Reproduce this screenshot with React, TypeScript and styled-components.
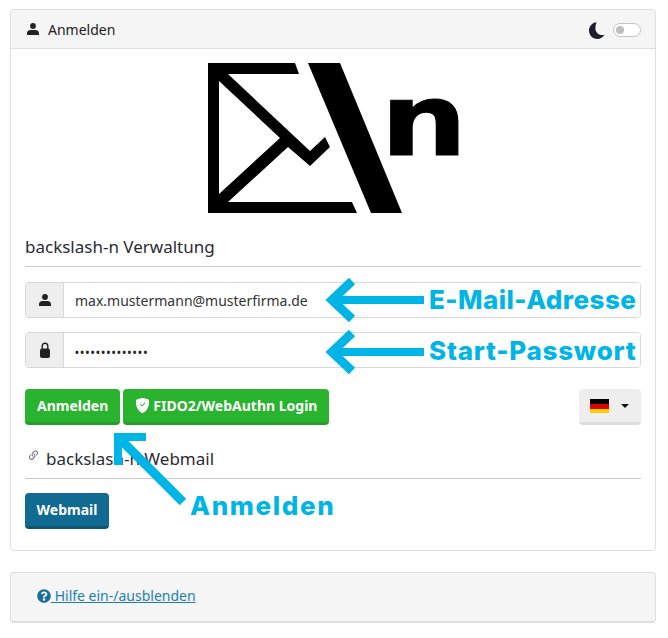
import React from "react";
import styled, { createGlobalStyle } from "styled-components";
import { FaQuestionCircle } from "react-icons/fa";
import { BsShieldFillCheck, BsLink45Deg } from "react-icons/bs";

const Global = createGlobalStyle`
  html, body { margin: 0; padding: 0; background: #fff; }
  body { font-family: "Noto Sans", "Open Sans", sans-serif; color: #212529; font-size: 14px; }
  * { box-sizing: border-box; }
`;

const Page = styled.div`
  position: relative;
  width: 668px;
  height: 638px;
  padding: 9px 12px 0 10px;
  overflow: hidden;
`;

const Card = styled.section`
  height: 542px;
  border: 1px solid #dedede;
  border-radius: 4px;
  background: #fff;
`;

const CardHeader = styled.header`
  height: 39px;
  background: #f5f5f5;
  border-bottom: 1px solid #dedede;
  border-radius: 3px 3px 0 0;
  padding: 0 14px 0 16px;
  display: flex;
  align-items: center;
  justify-content: space-between;
`;

const HeaderTitle = styled.div`
  display: flex;
  align-items: center;
  gap: 9px;
  font-size: 14px;
  color: #222;
`;

const ThemeSwitch = styled.div`
  display: flex;
  align-items: center;
  gap: 8px;
  margin-top: 2px;
  svg { width: 16px; height: 17px; color: #1c1f2b; }
`;

const Toggle = styled.span`
  display: block;
  width: 28px;
  height: 14px;
  border: 1px solid #c4c4c4;
  border-radius: 7px;
  background: #fff;
  padding: 2px;
  &::before {
    content: "";
    display: block;
    width: 8px;
    height: 8px;
    border-radius: 50%;
    background: #bdbdbd;
  }
`;

const CardBody = styled.div`
  padding: 14px 14px 0 14px;
`;

const LogoWrap = styled.div`
  display: flex;
  justify-content: flex-start;
  padding-left: 183px;
  height: 150px;
  margin-bottom: 20px;
`;

const SectionTitle = styled.h2`
  margin: 0;
  font-size: 17px;
  font-weight: 400;
  line-height: 23px;
  height: 34px;
  padding-top: 2px;
  border-bottom: 1px solid #c9c9c9;
  color: #2b2b33;
  display: flex;
  align-items: flex-start;
  svg { width: 13px; height: 13px; margin: 2px 6px 0 2px; color: #555; flex: none; }
`;

const Field = styled.div<{ $top: number }>`
  display: flex;
  height: 36px;
  margin-top: ${(p) => p.$top}px;
  border: 1px solid #d8d8dc;
  border-radius: 4px;
  overflow: hidden;
`;

const FieldIcon = styled.span`
  width: 38px;
  flex: none;
  background: #eeeeee;
  border-right: 1px solid #d8d8dc;
  display: flex;
  align-items: center;
  justify-content: center;
  color: #222;
`;

const FieldValue = styled.span`
  flex: 1;
  display: flex;
  align-items: center;
  padding-left: 11px;
  font-size: 14px;
  color: #333;
  background: #fff;
`;

const Dots = styled(FieldValue)`
  letter-spacing: 1.5px;
  font-size: 10px;
  font-weight: 700;
  color: #222;
  padding-top: 3px;
`;

const ButtonRow = styled.div`
  display: flex;
  gap: 3px;
  margin-top: 21px;
`;

const Button = styled.button<{ $bg: string; $edge: string }>`
  height: 36px;
  padding: 0 12px;
  border: none;
  border-bottom: 3px solid ${(p) => p.$edge};
  border-radius: 4px;
  background: ${(p) => p.$bg};
  color: #fff;
  font-family: "Noto Sans", "Open Sans", sans-serif;
  font-size: 14px;
  font-weight: 700;
  display: inline-flex;
  align-items: center;
  gap: 3px;
  svg { width: 15px; height: 15px; }
`;

const WebmailButton = styled(Button)`
  width: 84px;
  padding: 0;
  justify-content: center;
`;

const FlagButton = styled.button`
  margin-left: auto;
  width: 62px;
  height: 36px;
  padding: 0 0 0 11px;
  border: none;
  border-bottom: 3px solid #dcdcdc;
  border-radius: 4px;
  background: #eeeeee;
  display: flex;
  align-items: center;
  gap: 12px;
`;

const Caret = styled.span`
  width: 0;
  height: 0;
  border-left: 4px solid transparent;
  border-right: 4px solid transparent;
  border-top: 4px solid #111;
`;

const WebmailBlock = styled.div`
  margin-top: 20px;
`;

const WebmailRow = styled.div`
  margin-top: 14px;
`;

const HelpBox = styled.div`
  height: 51px;
  margin-top: 21px;
  padding: 0 26px 3px;
  display: flex;
  align-items: center;
  background: #f5f5f5;
  border: 1px solid #dedede;
  border-bottom-width: 2px;
  border-radius: 4px;
`;

const HelpLink = styled.a`
  color: #1c7fae;
  font-size: 14px;
  text-decoration: underline;
  svg { font-size: 14px; color: #1a6f99; vertical-align: -2px; }
`;

const Overlay = styled.svg`
  position: absolute;
  left: 0;
  top: 0;
  pointer-events: none;
`;

const Note = styled.span<{ $x: number; $y: number; $spacing: number }>`
  position: absolute;
  left: ${(p) => p.$x}px;
  top: ${(p) => p.$y}px;
  font-family: Inter, "Open Sans", sans-serif;
  font-weight: 800;
  font-size: 26px;
  line-height: 32px;
  letter-spacing: ${(p) => p.$spacing}px;
  color: #00b5e6;
  white-space: nowrap;
`;

const PersonIcon = () => (
  <svg width="12" height="12" viewBox="0 0 12 12" fill="currentColor">
    <circle cx="6" cy="3" r="2.9" />
    <path d="M0 12V10.2C0 8.2 1.7 7 3.6 7H8.4C10.3 7 12 8.2 12 10.2V12Z" />
  </svg>
);

const LockIcon = () => (
  <svg width="10" height="16" viewBox="0 0 10 16">
    <path d="M2.2 7V4.2C2.2 2.5 3.4 1.2 5 1.2S7.8 2.5 7.8 4.2V7" fill="none" stroke="currentColor" strokeWidth="1.4" />
    <rect x="0" y="6.5" width="10" height="9.5" rx="2" fill="currentColor" />
  </svg>
);

const MoonIcon = () => (
  <svg viewBox="0 0 16 17" fill="currentColor">
    <path d="M7.6 0.2C3.2 0.6 0 4.2 0 8.5 0 13.2 3.6 17 8.2 17 11.4 17 14.2 15.1 15.6 12.4 14.8 12.8 14 13 13 13 9.4 13 6.4 10 6.4 6.2 6.4 3.9 6.9 1.8 7.6 0.2Z" />
  </svg>
);

const Logo = () => (
  <svg width="260" height="150" viewBox="208 63 260 150">
    <path d="M208 63H295L299 74H219V202H352L357 213H208Z" fill="#000" />
    <path d="M219 74H228L310 151L325 137L330 147L310 166L288 147L228 202H219V194L280 138L219 81Z" fill="#000" />
    <path d="M308 63H340L402 213H371Z" fill="#000" />
    <text
      x="0"
      y="0"
      transform="translate(380.5 155) scale(1.22 1)"
      fontFamily="DejaVu Sans"
      fontWeight="700"
      fontSize="100"
      fill="#000"
      stroke="#000"
      strokeWidth="1"
    >
      n
    </text>
  </svg>
);

const Flag = () => (
  <svg width="19" height="14" viewBox="0 0 19 14">
    <rect width="19" height="5" fill="#000" />
    <rect y="5" width="19" height="5" fill="#dd0000" />
    <rect y="10" width="19" height="4" fill="#ffce00" />
  </svg>
);

export default function App() {
  return (
    <Page>
      <Global />
      <Card>
        <CardHeader>
          <HeaderTitle><PersonIcon />Anmelden</HeaderTitle>
          <ThemeSwitch><MoonIcon /><Toggle /></ThemeSwitch>
        </CardHeader>
        <CardBody>
          <LogoWrap><Logo /></LogoWrap>
          <SectionTitle>backslash-n Verwaltung</SectionTitle>
          <Field $top={15}>
            <FieldIcon><PersonIcon /></FieldIcon>
            <FieldValue>max.mustermann@musterfirma.de</FieldValue>
          </Field>
          <Field $top={14}>
            <FieldIcon><LockIcon /></FieldIcon>
            <Dots>••••••••••••••</Dots>
          </Field>
          <ButtonRow>
            <Button $bg="#29b32e" $edge="#249f29">Anmelden</Button>
            <Button $bg="#29b32e" $edge="#249f29"><BsShieldFillCheck />FIDO2/WebAuthn Login</Button>
            <FlagButton><Flag /><Caret /></FlagButton>
          </ButtonRow>
          <WebmailBlock>
            <SectionTitle><BsLink45Deg />backslash-n Webmail</SectionTitle>
            <WebmailRow>
              <WebmailButton $bg="#106a91" $edge="#0c5574">Webmail</WebmailButton>
            </WebmailRow>
          </WebmailBlock>
        </CardBody>
      </Card>
      <HelpBox>
        <HelpLink href="#"><FaQuestionCircle /> Hilfe ein-/ausblenden</HelpLink>
      </HelpBox>
      <Overlay width="668" height="638" viewBox="0 0 668 638">
        <g fill="none" stroke="#00b5e6" strokeWidth="8">
          <path d="M424 300H333" />
          <path d="M352 281L332 300L352 319" strokeWidth="9" />
          <path d="M424 352H333" />
          <path d="M352 333L332 352L352 371" strokeWidth="9" />
          <path d="M146 437H118V465" />
          <path d="M118 437L183 502" strokeWidth="9" />
        </g>
      </Overlay>
      <Note $x={429} $y={284} $spacing={0.45}>E-Mail-Adresse</Note>
      <Note $x={429} $y={335} $spacing={0.75}>Start-Passwort</Note>
      <Note $x={190} $y={490} $spacing={1.65}>Anmelden</Note>
    </Page>
  );
}
